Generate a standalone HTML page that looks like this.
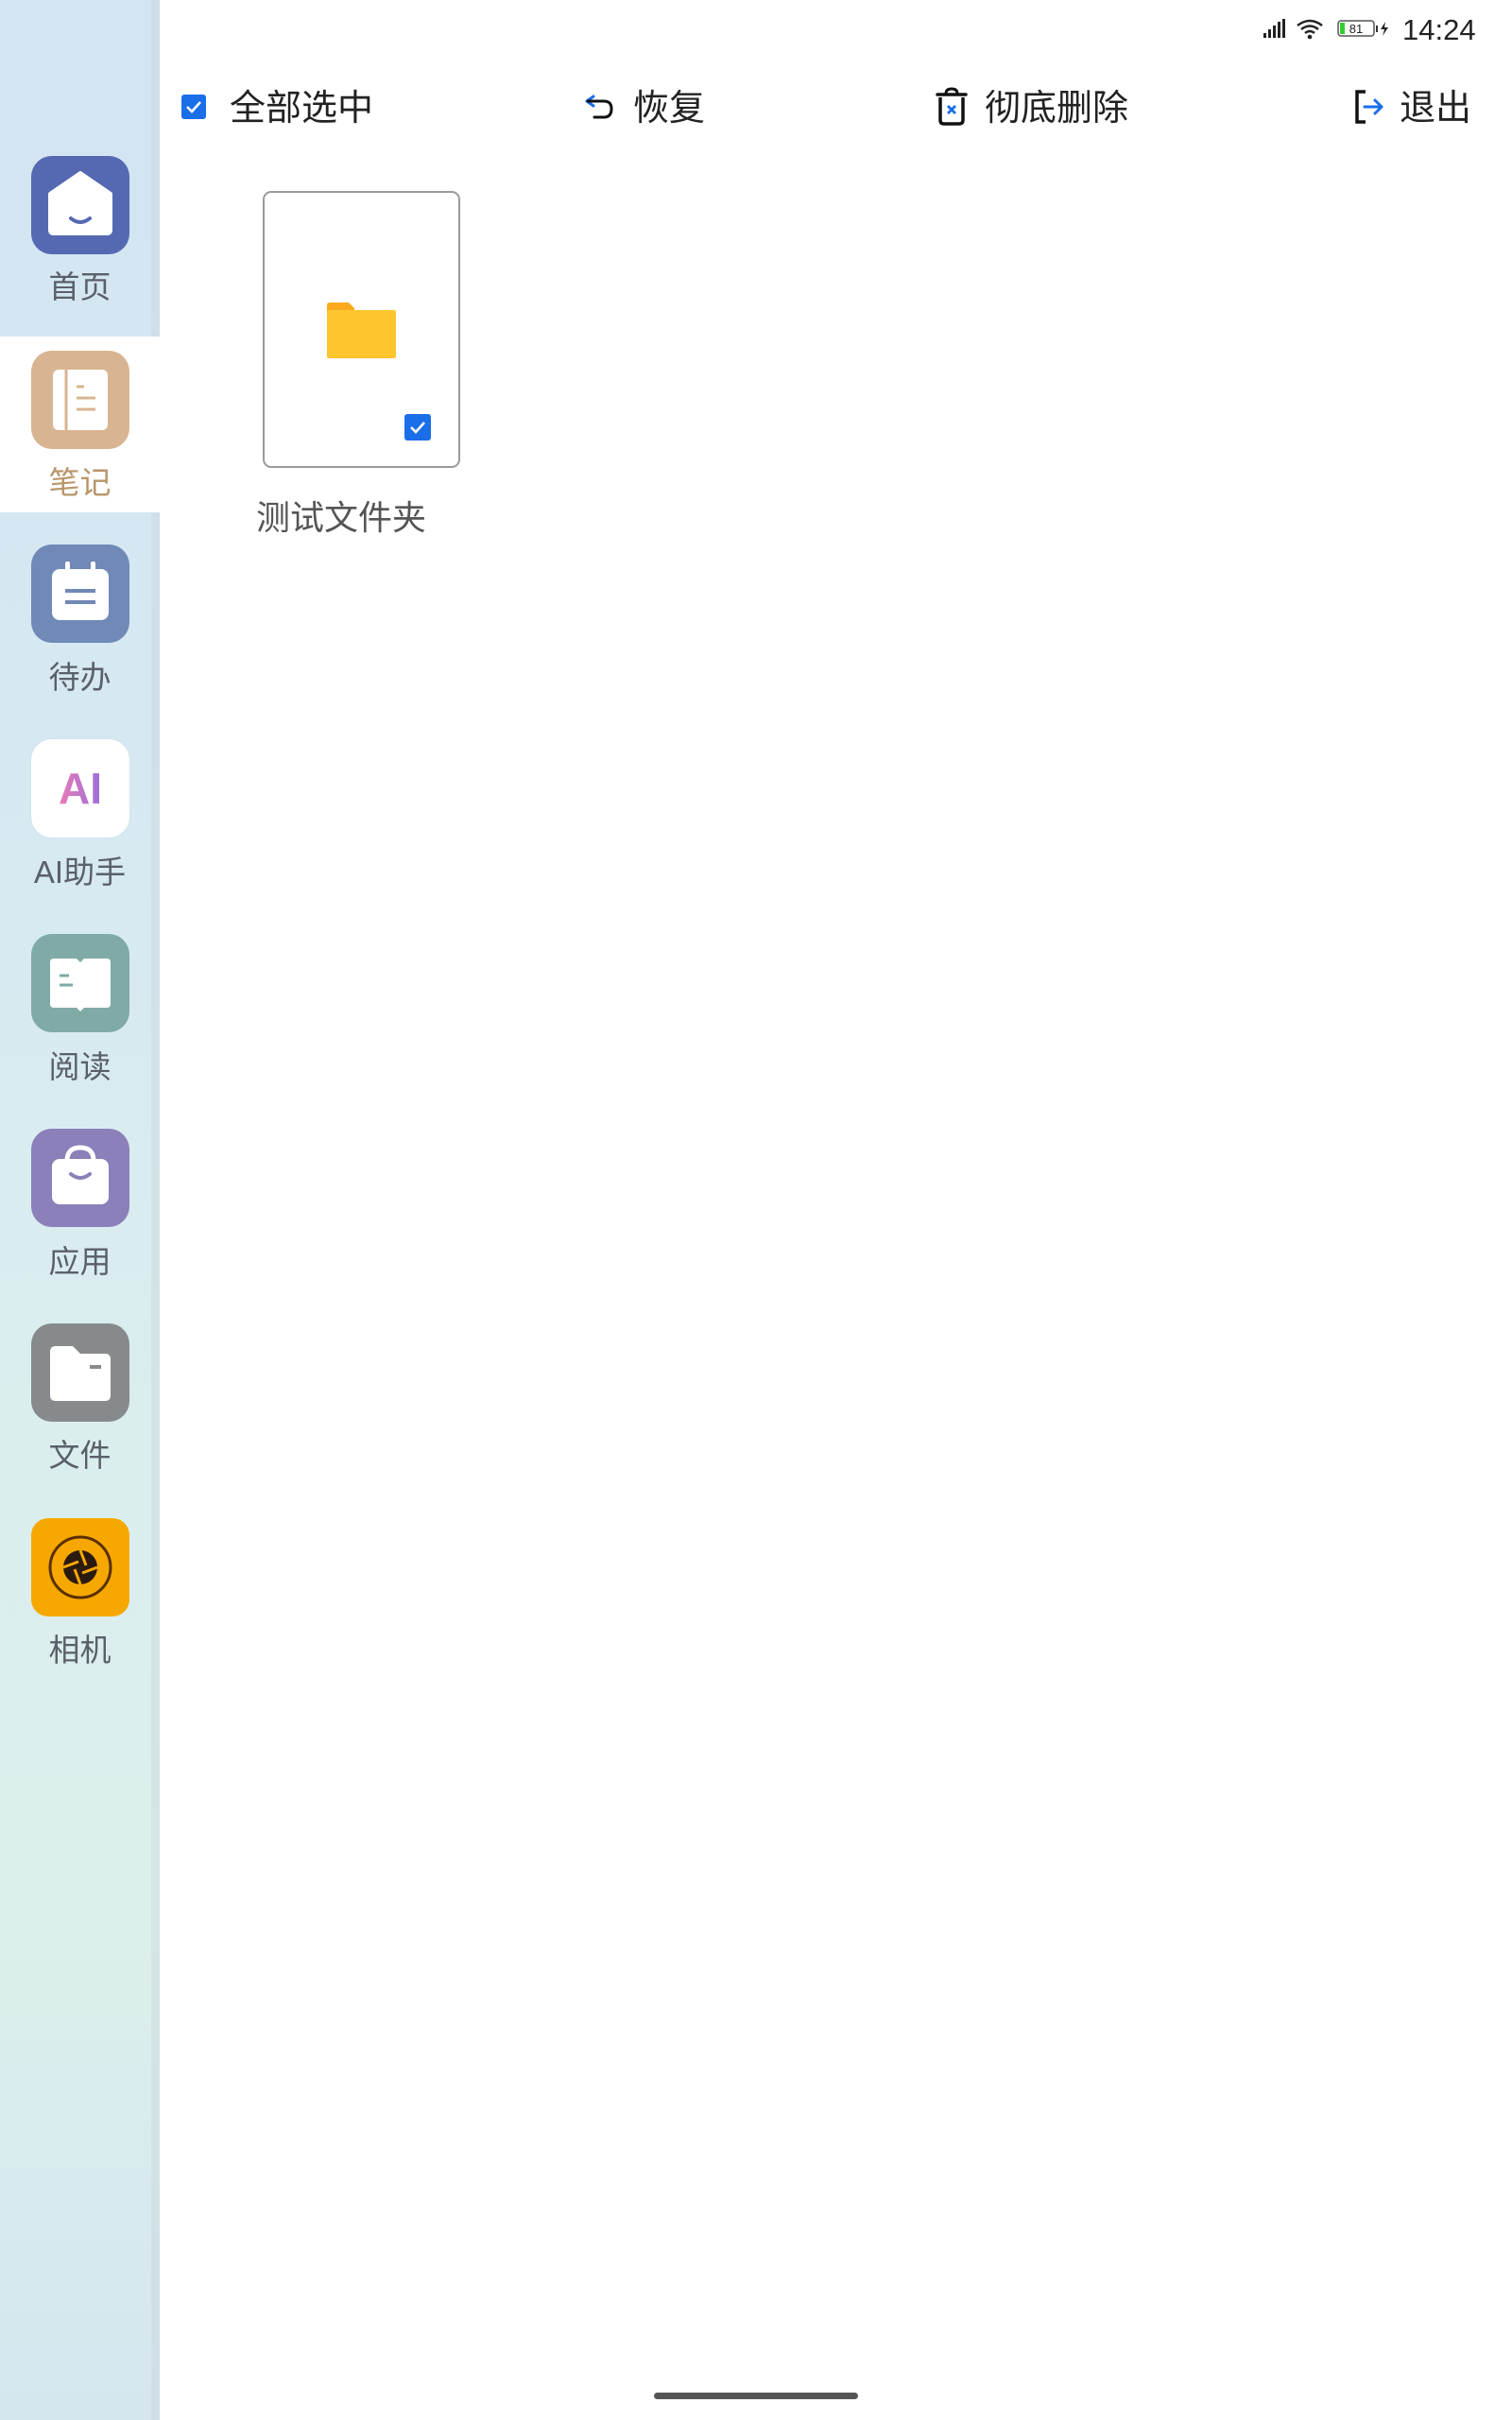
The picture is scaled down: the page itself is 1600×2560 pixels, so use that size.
<!DOCTYPE html>
<html><head><meta charset="utf-8">
<style>
*{margin:0;padding:0;box-sizing:border-box}
body{width:1600px;height:2560px;background:#fff;position:relative;overflow:hidden;font-family:"Liberation Sans","Noto Sans CJK SC",sans-serif}
.side{position:absolute;left:0;top:0;width:169px;height:2560px;background:linear-gradient(180deg,#d3e4f2 0%,#d6e8f2 30%,#dbeeee 60%,#dcefec 80%,#d5e6ef 100%)}
.edge{position:absolute;left:160px;top:0;width:9px;height:2560px;background:rgba(200,210,215,.35)}
.sel{position:absolute;left:0;top:356px;width:169px;height:186px;background:#fff}
.ic{position:absolute;left:33px;width:104px;height:104px;border-radius:22px}
.lb{position:absolute;left:0;width:169px;text-align:center;font-size:33px;color:#5a606a;line-height:40px}
.t{position:absolute;font-size:38px;color:#222;line-height:44px;top:93px}
</style></head><body>
<div class="side"></div>
<div class="edge"></div>
<div class="sel"></div>

<div class="ic" style="top:165px;background:#5569b3">
<svg width="104" height="104"><path d="M20 40 L52 18 L84 40 L84 78 Q84 82 80 82 L24 82 Q20 82 20 78Z" fill="#fff" stroke="#fff" stroke-linejoin="round" stroke-width="4"/><path d="M42 66 Q52 74 62 66" stroke="#5569b3" stroke-width="4" fill="none" stroke-linecap="round"/></svg></div>
<div class="lb" style="top:284px">首页</div>
<div class="ic" style="top:371px;background:#d9b492">
<svg width="104" height="104"><rect x="23" y="20" width="58" height="64" rx="6" fill="#fff"/><line x1="37" y1="20" x2="37" y2="84" stroke="#d9b492" stroke-width="3"/><line x1="48" y1="38" x2="56" y2="38" stroke="#d9b492" stroke-width="3"/><line x1="48" y1="50" x2="68" y2="50" stroke="#d9b492" stroke-width="3"/><line x1="48" y1="62" x2="68" y2="62" stroke="#d9b492" stroke-width="3"/></svg></div>
<div class="lb" style="top:491px;color:#b8966a">笔记</div>
<div class="ic" style="top:576px;background:#7089b6">
<svg width="104" height="104"><rect x="22" y="26" width="60" height="54" rx="8" fill="#fff"/><rect x="36" y="18" width="5" height="14" rx="2" fill="#fff"/><rect x="63" y="18" width="5" height="14" rx="2" fill="#fff"/><line x1="36" y1="49" x2="68" y2="49" stroke="#7089b6" stroke-width="4"/><line x1="36" y1="61" x2="68" y2="61" stroke="#7089b6" stroke-width="4"/></svg></div>
<div class="lb" style="top:697px">待办</div>
<div class="ic" style="top:782px;background:#fff;box-shadow:0 0 2px rgba(0,0,0,.05)">
<svg width="104" height="104"><defs><linearGradient id="g" x1="0" x2="1"><stop offset="0" stop-color="#e87bb8"/><stop offset="1" stop-color="#9a6fd8"/></linearGradient></defs><text x="52" y="68" text-anchor="middle" font-family="Liberation Sans" font-weight="bold" font-size="46" fill="url(#g)">AI</text></svg></div>
<div class="lb" style="top:903px">AI助手</div>
<div class="ic" style="top:988px;background:#7faaa5">
<svg width="104" height="104"><path d="M20 30 Q20 26 24 26 L48 26 L52 30 L56 26 L80 26 Q84 26 84 30 L84 74 Q84 78 80 78 L56 78 L52 82 L48 78 L24 78 Q20 78 20 74Z" fill="#fff"/><line x1="30" y1="44" x2="40" y2="44" stroke="#7faaa5" stroke-width="3"/><line x1="30" y1="54" x2="44" y2="54" stroke="#7faaa5" stroke-width="3"/></svg></div>
<div class="lb" style="top:1109px">阅读</div>
<div class="ic" style="top:1194px;background:#8b80b9">
<svg width="104" height="104"><path d="M38 34 Q38 20 52 20 Q66 20 66 34" stroke="#fff" stroke-width="5" fill="none"/><rect x="22" y="32" width="60" height="48" rx="8" fill="#fff"/><path d="M42 48 Q52 56 62 48" stroke="#8b80b9" stroke-width="4" fill="none" stroke-linecap="round"/></svg></div>
<div class="lb" style="top:1315px">应用</div>
<div class="ic" style="top:1400px;background:#878a8c">
<svg width="104" height="104"><path d="M20 30 Q20 24 26 24 L44 24 L52 32 L78 32 Q84 32 84 38 L84 76 Q84 82 78 82 L26 82 Q20 82 20 76Z" fill="#fff"/><line x1="62" y1="46" x2="74" y2="46" stroke="#878a8c" stroke-width="4"/></svg></div>
<div class="lb" style="top:1520px">文件</div>
<div class="ic" style="top:1606px;background:#f7a800;border-radius:18px">
<svg width="104" height="104"><circle cx="52" cy="52" r="32" stroke="#5a3000" stroke-width="3" fill="none"/><circle cx="52" cy="52" r="18" fill="#2b1a10"/><path d="M52 34 L58 50 M70 52 L54 58 M52 70 L46 54 M34 52 L50 46" stroke="#f7a800" stroke-width="3"/></svg></div>
<div class="lb" style="top:1726px">相机</div>

<svg style="position:absolute;left:1335px;top:18px" width="140" height="26">
<rect x="2" y="17" width="3" height="5" fill="#222"/><rect x="7" y="13" width="3" height="9" fill="#222"/><rect x="12" y="9" width="3" height="13" fill="#222"/><rect x="17" y="5" width="3" height="17" fill="#222"/><rect x="22" y="2" width="3" height="20" fill="#222"/>
<path d="M38 9 Q51 -1 64 9 M42 13 Q51 6 60 13 M46 17 Q51 13 56 17" stroke="#222" stroke-width="2.4" fill="none"/><circle cx="51" cy="21" r="2.3" fill="#222"/>
<rect x="81" y="4" width="38" height="16" rx="3" stroke="#555" stroke-width="1.5" fill="#fff"/><rect x="83" y="6" width="5" height="12" fill="#3c3"/><text x="100" y="17" text-anchor="middle" font-size="13" font-family="Liberation Sans" fill="#222">81</text><rect x="121" y="9" width="2" height="7" fill="#333"/>
<path d="M131 5 L126 13 L130 13 L128 20 L134 11 L130 11Z" fill="#222"/>
</svg>
<div style="position:absolute;left:1484px;top:14px;font-size:31px;color:#222;line-height:36px">14:24</div>

<svg style="position:absolute;left:192px;top:100px" width="26" height="26"><rect width="26" height="26" rx="3" fill="#1a6ee8"/><path d="M6 13 L11 18 L20 8" stroke="#fff" stroke-width="2.6" fill="none"/></svg>
<div class="t" style="left:243px">全部选中</div>
<svg style="position:absolute;left:615px;top:96px" width="40" height="36"><path d="M13 6 L6 11 L13 16" stroke="#1a6ee8" stroke-width="3" fill="none" stroke-linecap="round" stroke-linejoin="round"/><path d="M7 11 L24 11 Q32 11 32 19 Q32 28 24 28 L14 28" stroke="#111" stroke-width="3" fill="none" stroke-linecap="round"/></svg>
<div class="t" style="left:670px">恢复</div>
<svg style="position:absolute;left:988px;top:91px" width="40" height="44"><path d="M13 8 Q13 3 19 3 Q25 3 25 8" stroke="#111" stroke-width="3" fill="none"/><line x1="4" y1="9" x2="34" y2="9" stroke="#111" stroke-width="3.5" stroke-linecap="round"/><path d="M7 12 L7 36 Q7 40 11 40 L27 40 Q31 40 31 36 L31 12" stroke="#111" stroke-width="3.5" fill="none"/><path d="M15 21 L23 29 M23 21 L15 29" stroke="#1a6ee8" stroke-width="2.8"/></svg>
<div class="t" style="left:1042px">彻底删除</div>
<svg style="position:absolute;left:1432px;top:93px" width="40" height="40"><path d="M13 4 L4 4 L4 36 L13 36" stroke="#111" stroke-width="3.5" fill="none"/><path d="M12 20 L30 20 M23 13 L30 20 L23 27" stroke="#1a6ee8" stroke-width="3" fill="none" stroke-linecap="round" stroke-linejoin="round"/></svg>
<div class="t" style="left:1481px">退出</div>

<div style="position:absolute;left:278px;top:202px;width:209px;height:293px;border:2px solid #9a9a9a;border-radius:9px;background:#fff"></div>
<svg style="position:absolute;left:345px;top:318px" width="76" height="64"><path d="M1 5 Q1 2 4 2 L24 2 L30 8 L30 12 L1 12Z" fill="#fbaa1e"/><rect x="1" y="10" width="73" height="51" rx="2" fill="#fec52e"/></svg>
<svg style="position:absolute;left:428px;top:438px" width="28" height="28"><rect width="28" height="28" rx="3" fill="#1a6ee8"/><path d="M7 14 L12 19 L21 9" stroke="#fff" stroke-width="2.6" fill="none"/></svg>
<div style="position:absolute;left:271px;top:526px;font-size:36px;color:#555;line-height:44px">测试文件夹</div>

<div style="position:absolute;left:692px;top:2531px;width:216px;height:7px;border-radius:4px;background:#555"></div>
</body></html>
